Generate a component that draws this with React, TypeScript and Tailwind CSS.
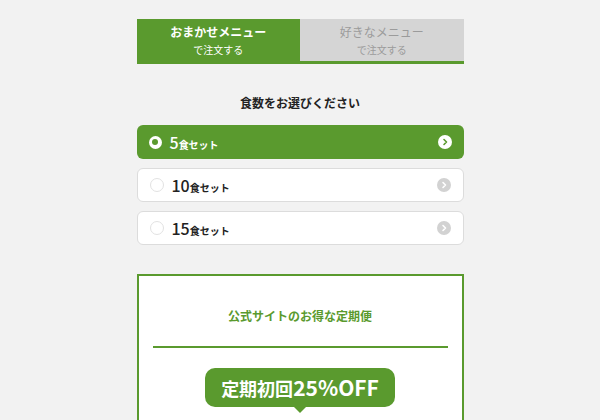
import { useState } from 'react';

const options = [
    { id: 5, label: '5' },
    { id: 10, label: '10' },
    { id: 15, label: '15' },
];

const font = { fontFamily: '"Noto Sans CJK JP", "Noto Sans", sans-serif' };

function Chevron({ active }: { active: boolean }) {
    return (
        <span
            className={`w-[14px] h-[14px] rounded-full flex items-center justify-center ${
                active ? 'bg-white' : 'bg-[#d2d2d2]'
            }`}
        >
            <svg width="8" height="8" viewBox="0 0 8 8">
                <path
                    d="M3 1.5 L5.5 4 L3 6.5"
                    fill="none"
                    stroke={active ? '#5a9a2e' : '#ffffff'}
                    strokeWidth="1.6"
                    strokeLinecap="round"
                    strokeLinejoin="round"
                />
            </svg>
        </span>
    );
}

export default function App() {
    const [selected, setSelected] = useState(5);

    return (
        <div className="min-h-[420px] bg-[#f2f2f2] overflow-hidden" style={font}>
            <div className="w-[327px] mx-auto pt-[19px]">
                {/* tabs */}
                <div className="flex border-b-[3px] border-[#5a9a2e]">
                    <div className="flex-1 h-[42px] bg-[#5a9a2e] flex flex-col items-center justify-center text-white">
                        <p className="text-[12px] font-bold leading-[16px]">おまかせメニュー</p>
                        <p className="text-[10px] leading-[14px] mt-[3px]">で注文する</p>
                    </div>
                    <div className="flex-1 h-[42px] bg-[#d5d5d5] flex flex-col items-center justify-center text-[#9b9b9b]">
                        <p className="text-[12px] leading-[16px]">好きなメニュー</p>
                        <p className="text-[10px] leading-[14px] mt-[3px]">で注文する</p>
                    </div>
                </div>

                <h2 className="mt-[31px] text-center text-[12px] font-bold text-[#222] leading-[16px]">
                    食数をお選びください
                </h2>

                <div className="mt-[14px] flex flex-col gap-[9px]">
                    {options.map(o => {
                        const active = o.id === selected;
                        return (
                            <button
                                key={o.id}
                                onClick={() => setSelected(o.id)}
                                className={`h-[34px] rounded-[6px] flex items-center justify-between px-[12px] text-left ${
                                    active
                                        ? 'bg-[#5a9a2e] text-white'
                                        : 'bg-white text-[#222] border border-[#dcdcdc]'
                                }`}
                            >
                                <span className="flex items-center gap-[8px]">
                                    {active ? (
                                        <span className="w-[13px] h-[13px] rounded-full bg-white flex items-center justify-center">
                                            <span className="w-[6px] h-[6px] rounded-full bg-[#5a9a2e]" />
                                        </span>
                                    ) : (
                                        <span className="w-[14px] h-[14px] rounded-full bg-white border border-[#e2e2e2]" />
                                    )}
                                    <span className="flex items-baseline">
                                        <span className="text-[16px] font-medium leading-none">{o.label}</span>
                                        <span className="text-[10px] font-bold leading-none">食セット</span>
                                    </span>
                                </span>
                                <Chevron active={active} />
                            </button>
                        );
                    })}
                </div>

                {/* subscription card */}
                <div className="mt-[29px] bg-white border-2 border-[#5a9a2e] px-[14px] pt-[32px] pb-[20px]">
                    <p className="text-center text-[12px] font-bold text-[#5a9a2e] leading-[16px]">
                        公式サイトのお得な定期便
                    </p>
                    <div className="mt-[22px] h-[2px] bg-[#5a9a2e]" />
                    <div className="mt-[20px] flex justify-center">
                        <div className="relative w-[190px] h-[39px] rounded-[10px] bg-[#5a9a2e] flex items-center justify-center text-white font-bold">
                            <span className="text-[18px] leading-none">定期初回</span>
                            <span className="text-[21px] leading-none">25%OFF</span>
                            <span className="absolute left-1/2 -translate-x-1/2 -bottom-[6px] w-0 h-0 border-l-[6px] border-r-[6px] border-t-[6px] border-l-transparent border-r-transparent border-t-[#5a9a2e]" />
                        </div>
                    </div>
                    <div className="h-[40px]" />
                </div>
            </div>
        </div>
    );
}
